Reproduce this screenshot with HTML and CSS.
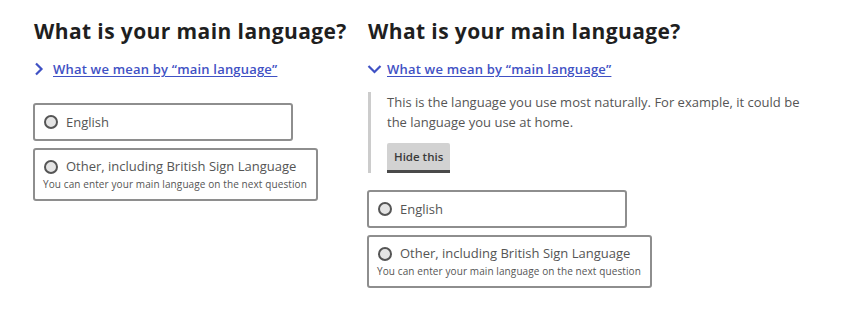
FILE: index.html
```html
<!DOCTYPE html>
<html>
<head>
  <meta charset="utf-8">
  <link rel="stylesheet" href="styles.css">
</head>
<body>
  <div class="page">
    <!-- Collapsed state -->
    <div class="question">
      <h1>What is your main language?</h1>
      <div class="toggle">
        <svg class="chevron" width="10" height="14" viewBox="0 0 10 14"><polyline points="2,1.5 7.5,7 2,12.5" fill="none" stroke="#3f51c4" stroke-width="2.2"/></svg>
        <a href="#" class="toggle-link">What we mean by “main language”</a>
      </div>
      <div class="options">
        <label class="option">
          <span class="option-row"><span class="radio"></span>English</span>
        </label>
        <label class="option wide">
          <span class="option-row"><span class="radio"></span>Other, including British Sign Language</span>
          <span class="hint">You can enter your main language on the next question</span>
        </label>
      </div>
    </div>

    <!-- Expanded state -->
    <div class="question">
      <h1>What is your main language?</h1>
      <div class="toggle">
        <svg class="chevron open" width="15" height="10" viewBox="0 0 15 10"><polyline points="1.5,2 7.5,8 13.5,2" fill="none" stroke="#3f51c4" stroke-width="2.2"/></svg>
        <a href="#" class="toggle-link">What we mean by “main language”</a>
      </div>
      <div class="details-body">
        <p>This is the language you use most naturally. For example, it could be the language you use at home.</p>
        <button class="hide-button">Hide this</button>
      </div>
      <div class="options">
        <label class="option">
          <span class="option-row"><span class="radio"></span>English</span>
        </label>
        <label class="option wide">
          <span class="option-row"><span class="radio"></span>Other, including British Sign Language</span>
          <span class="hint">You can enter your main language on the next question</span>
        </label>
      </div>
    </div>
  </div>
</body>
</html>
```

FILE: styles.css
```css
body {
  margin: 0;
  padding: 0;
  font-family: 'Open Sans', 'Noto Sans', sans-serif;
  background: #ffffff;
  color: #222222;
}

.page {
  display: flex;
  padding: 19px 0 0 33px;
}

.question {
  width: 334px;
  display: flex;
  flex-direction: column;
  align-items: flex-start;
}

h1 {
  margin: 0 0 0 1px;
  font-size: 21px;
  line-height: 25px;
  letter-spacing: 0.4px;
  font-weight: 700;
  color: #1f1f1f;
  white-space: nowrap;
}

.toggle {
  display: flex;
  align-items: center;
  margin-top: 16px;
  height: 18px;
}

.chevron {
  margin: 0 9px 0 1px;
}

.chevron.open {
  margin: 0 5px 0 0;
}

.toggle-link {
  font-size: 13px;
  letter-spacing: 0.2px;
  font-weight: 600;
  color: #3f51c4;
  text-decoration: underline;
  text-underline-offset: 2px;
  white-space: nowrap;
}

.details-body {
  margin: 14px 0 0 1px;
  padding-left: 16px;
  border-left: 3px solid #cccccc;
}

.details-body p {
  margin: 0;
  width: 420px;
  font-size: 13px;
  line-height: 20px;
  color: #555555;
}

.hide-button {
  margin-top: 11px;
  height: 30px;
  padding: 0 7px;
  background: #d2d2d2;
  border: none;
  border-bottom: 3px solid #4a4a4a;
  border-radius: 2px 2px 0 0;
  font-family: inherit;
  font-size: 11.5px;
  font-weight: 600;
  color: #3a3a3a;
}

.options {
  margin-top: 25px;
  display: flex;
  flex-direction: column;
  gap: 7px;
}

.details-body + .options {
  margin-top: 17px;
}

.option {
  width: 260px;
  box-sizing: border-box;
  border: 2px solid #8e8e8e;
  border-radius: 3px;
  padding: 7.5px 8px;
  display: flex;
  flex-direction: column;
}

.option.wide {
  width: 285px;
  padding-top: 7px;
  padding-bottom: 7px;
}

.option-row {
  display: flex;
  align-items: center;
  font-size: 13px;
  line-height: 19px;
  color: #555555;
  white-space: nowrap;
}

.radio {
  width: 10px;
  height: 10px;
  border: 2px solid #555555;
  border-radius: 50%;
  background: #e4e4e4;
  margin: 0 8px 0 1px;
  flex-shrink: 0;
}

.hint {
  font-size: 10px;
  letter-spacing: 0.1px;
  line-height: 16px;
  color: #555555;
  white-space: nowrap;
}
```
